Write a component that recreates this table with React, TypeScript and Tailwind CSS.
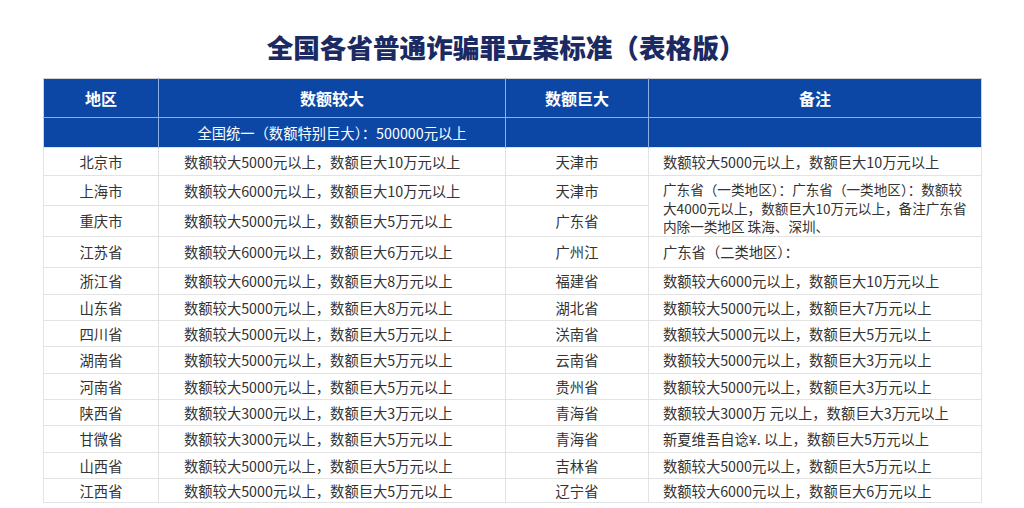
const rows: { region: string; big: string; city: string; note?: string; h: string }[] = [
  { region: "北京市", big: "数额较大5000元以上，数额巨大10万元以上", city: "天津市", note: "数额较大5000元以上，数额巨大10万元以上", h: "h-[28px]" },
  { region: "上海市", big: "数额较大6000元以上，数额巨大10万元以上", city: "天津市", h: "h-[30px]" },
  { region: "重庆市", big: "数额较大5000元以上，数额巨大5万元以上", city: "广东省", h: "h-[31px]" },
  { region: "江苏省", big: "数额较大6000元以上，数额巨大6万元以上", city: "广州江", note: "广东省（二类地区）：", h: "h-[31px]" },
  { region: "浙江省", big: "数额较大6000元以上，数额巨大8万元以上", city: "福建省", note: "数额较大6000元以上，数额巨大10万元以上", h: "h-[27px]" },
  { region: "山东省", big: "数额较大5000元以上，数额巨大8万元以上", city: "湖北省", note: "数额较大5000元以上，数额巨大7万元以上", h: "h-[26px]" },
  { region: "四川省", big: "数额较大5000元以上，数额巨大5万元以上", city: "浂南省", note: "数额较大5000元以上，数额巨大5万元以上", h: "h-[26px]" },
  { region: "湖南省", big: "数额较大5000元以上，数额巨大5万元以上", city: "云南省", note: "数额较大5000元以上，数额巨大3万元以上", h: "h-[27px]" },
  { region: "河南省", big: "数额较大5000元以上，数额巨大5万元以上", city: "贵州省", note: "数额较大5000元以上，数额巨大3万元以上", h: "h-[26px]" },
  { region: "陕西省", big: "数额较大3000元以上，数额巨大3万元以上", city: "青海省", note: "数额较大3000万 元以上，数额巨大3万元以上", h: "h-[26px]" },
  { region: "甘微省", big: "数额较大3000元以上，数额巨大5万元以上", city: "青海省", note: "新夏维吾自谂¥. 以上，数额巨大5万元以上", h: "h-[27px]" },
  { region: "山西省", big: "数额较大5000元以上，数额巨大5万元以上", city: "吉林省", note: "数额较大5000元以上，数额巨大5万元以上", h: "h-[26px]" },
  { region: "江西省", big: "数额较大5000元以上，数额巨大5万元以上", city: "辽宁省", note: "数额较大6000元以上，数额巨大6万元以上", h: "h-[24px]" },
];

export default function App() {
  return (
    <div
      className="w-[1024px] h-[508px] bg-white overflow-hidden"
      style={{ fontFamily: '"Noto Sans CJK SC", "Noto Sans", sans-serif' }}
    >
      <h1 className="pt-[30px] text-center text-[26.6px] leading-[34px] font-black text-[#1b2a62] pr-[12px]">
        全国各省普通诈骗罪立案标准（表格版）
      </h1>

      <table className="mt-[14px] ml-[43px] w-[938px] table-fixed border-collapse border border-[#d2d2d2] text-[14.3px] text-[#333]">
        <colgroup>
          <col className="w-[115px]" />
          <col className="w-[347px]" />
          <col className="w-[143px]" />
          <col className="w-[333px]" />
        </colgroup>
        <thead>
          <tr className="h-[39px] bg-[#0d47a6] text-white text-[16px] font-bold">
            <th className="border-r border-b border-[#8eb0e6] font-bold">地区</th>
            <th className="border-r border-b border-[#8eb0e6] font-bold">数额较大</th>
            <th className="border-r border-b border-[#8eb0e6] font-bold">数额巨大</th>
            <th className="border-b border-[#8eb0e6] font-bold">备注</th>
          </tr>
          <tr className="h-[30px] bg-[#0d47a6] text-white text-[14.3px]">
            <th className="border-r border-[#8eb0e6]"></th>
            <th className="border-r border-[#8eb0e6] font-normal">全国统一（数额特别巨大）：500000元以上</th>
            <th className="border-r border-[#8eb0e6]"></th>
            <th></th>
          </tr>
        </thead>
        <tbody>
          {rows.map((r, i) => (
            <tr key={i} className={r.h}>
              <td className="border border-[#e3e3e3] text-center p-0">{r.region}</td>
              <td className="border border-[#e3e3e3] pl-[25px] p-0 whitespace-nowrap">{r.big}</td>
              <td className="border border-[#e3e3e3] text-center p-0">{r.city}</td>
              {i === 1 ? (
                <td rowSpan={2} className="border border-[#e3e3e3] pl-[14px] pt-[4px] pb-0 pr-0 text-[13.6px] leading-[18.5px] whitespace-nowrap">
                  广东省（一类地区）：广东省（一类地区）：数额较
                  <br />
                  大4000元以上，数额巨大10万元以上，备注广东省
                  <br />
                  内除一类地区 珠海、深圳、
                </td>
              ) : i === 2 ? null : (
                <td className="border border-[#e3e3e3] pl-[14px] p-0 whitespace-nowrap">{r.note}</td>
              )}
            </tr>
          ))}
        </tbody>
      </table>
    </div>
  );
}
